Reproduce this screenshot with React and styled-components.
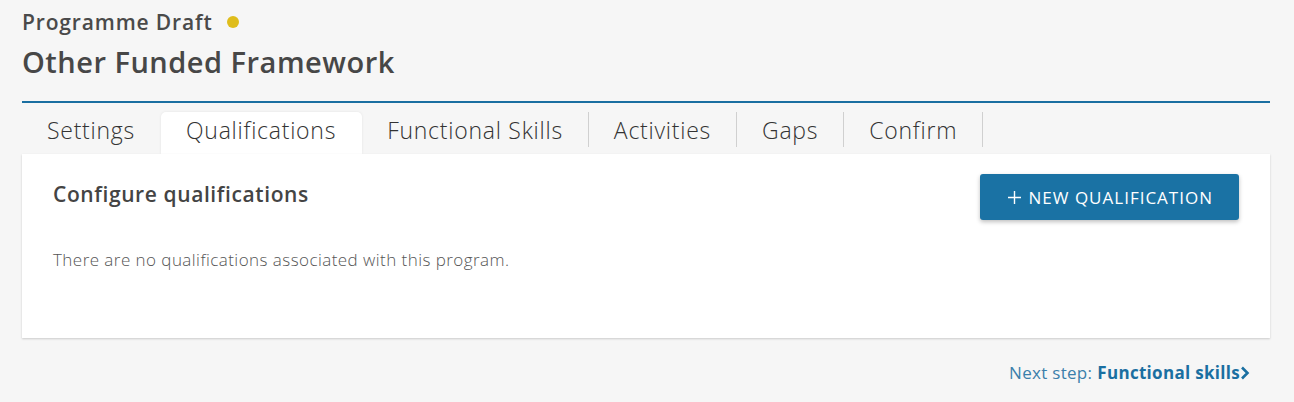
import styled, { createGlobalStyle } from 'styled-components';

const GlobalStyle = createGlobalStyle`
   html, body {
      margin: 0;
      padding: 0;
      background: #f6f6f6;
      font-family: 'Open Sans', 'Noto Sans', sans-serif;
      color: #444;
   }
`;

const Page = styled.div`
   padding: 8px 24px 0 22px;
   min-height: 402px;
   box-sizing: border-box;
`;

const Status = styled.div`
   display: flex;
   align-items: center;
   gap: 14px;
   font-size: 21px;
   font-weight: 600;
   letter-spacing: 0.85px;
   color: #4a4a4a;
   height: 28px;
`;

const Dot = styled.span`
   width: 12px;
   height: 12px;
   border-radius: 50%;
   background: ${p => p.color};
`;

const Title = styled.h1`
   margin: 6px 0 0;
   font-size: 29px;
   font-weight: 600;
   letter-spacing: 0.5px;
   color: #474747;
   line-height: 40px;
   padding-bottom: 19px;
   border-bottom: 2px solid #1a6fa1;
`;

const Tabs = styled.ul`
   display: flex;
   list-style: none;
   margin: 9px 0 0;
   padding: 0;
   height: 42px;
`;

const Tab = styled.li`
   display: flex;
   align-items: center;
   padding: 0 26px 7px 25px;
   font-size: 23px;
   font-weight: 300;
   letter-spacing: 0.75px;
   color: #333;
   border-radius: 5px 5px 0 0;
   background: ${p => (p.active ? '#fff' : 'transparent')};
   box-shadow: ${p => (p.active ? '0 0 3px rgba(0,0,0,0.08)' : 'none')};
   position: relative;
   &::after {
      content: '';
      display: ${p => (p.noSep ? 'none' : 'block')};
      position: absolute;
      right: 0;
      top: 0;
      height: 35px;
      width: 1px;
      background: #d0d0d0;
   }
`;

const Card = styled.section`
   background: #fff;
   padding: 20px 31px 67px;
   box-shadow: 0 1px 2px rgba(0, 0, 0, 0.18);
   position: relative;
`;

const CardHead = styled.div`
   display: flex;
   justify-content: space-between;
   align-items: flex-start;
`;

const CardTitle = styled.h2`
   margin: 6px 0 0;
   font-size: 21px;
   font-weight: 600;
   letter-spacing: 0.6px;
   color: #444;
`;

const PrimaryButton = styled.button`
   display: flex;
   align-items: center;
   gap: 8px;
   height: 46px;
   padding: 0 26px 0 28px;
   border: none;
   border-radius: 3px;
   background: #1a72a4;
   color: #fff;
   font-family: inherit;
   font-size: 17px;
   font-weight: 400;
   letter-spacing: 1px;
   box-shadow: 0 2px 4px rgba(0, 0, 0, 0.25);
   cursor: pointer;
`;

const Empty = styled.p`
   margin: 28px 0 0;
   font-size: 17px;
   font-weight: 300;
   letter-spacing: 0.45px;
   color: #555;
`;

const NextStep = styled.div`
   display: flex;
   justify-content: flex-end;
   align-items: center;
   margin-top: 23px;
   padding-right: 20px;
   font-size: 17px;
   letter-spacing: 0.3px;
   color: #3b7fab;
   & b {
      font-weight: 700;
      color: #1a6fa1;
      margin-left: 5px;
   }
`;

const tabs = ['Settings', 'Qualifications', 'Functional Skills', 'Activities', 'Gaps', 'Confirm'];

export default function App() {
   const active = 1;
   return (
      <Page>
         <GlobalStyle />
         <Status>
            Programme Draft <Dot color="#dfbd1c" />
         </Status>
         <Title>Other Funded Framework</Title>
         <Tabs>
            {tabs.map((t, i) => (
               <Tab key={t} active={i === active} noSep={i === active || i === active - 1}>
                  {t}
               </Tab>
            ))}
         </Tabs>
         <Card>
            <CardHead>
               <CardTitle>Configure qualifications</CardTitle>
               <PrimaryButton>
                  <svg width="13" height="13" viewBox="0 0 13 13">
                     <path d="M6.5 0v13M0 6.5h13" stroke="#fff" strokeWidth="1.4" />
                  </svg>
                  NEW QUALIFICATION
               </PrimaryButton>
            </CardHead>
            <Empty>There are no qualifications associated with this program.</Empty>
         </Card>
         <NextStep>
            Next step: <b>Functional skills</b>
            <svg width="10" height="14" viewBox="0 0 10 14">
               <path d="M2 1.5l5.5 5.5L2 12.5" stroke="#1a6fa1" strokeWidth="2.6" fill="none" />
            </svg>
         </NextStep>
      </Page>
   );
}
